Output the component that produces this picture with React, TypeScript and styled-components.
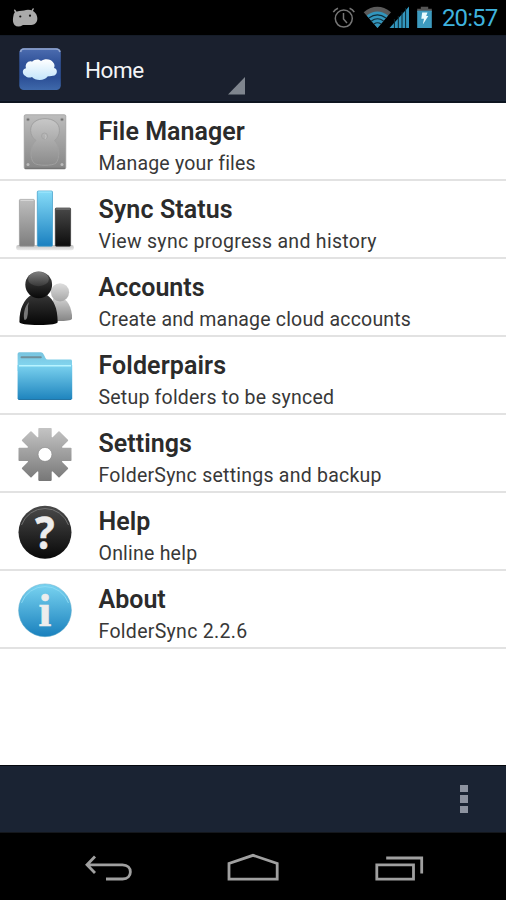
import React from "react";
import styled, { createGlobalStyle } from "styled-components";

const Global = createGlobalStyle`
  body { margin: 0; background: #000; }
  * { box-sizing: border-box; }
`;

const Screen = styled.div`
  width: 506px;
  height: 900px;
  display: flex;
  flex-direction: column;
  background: #fff;
  font-family: Roboto, "Noto Sans", sans-serif;
  overflow: hidden;
`;

const StatusBar = styled.header`
  flex: none;
  height: 35px;
  display: flex;
  align-items: center;
  justify-content: space-between;
  padding: 0 8px 0 0;
  background: #000;
`;

const StatusGroup = styled.div`
  display: flex;
  align-items: center;
  height: 35px;
`;

const Clock = styled.time`
  color: #3fb2dd;
  font-size: 24px;
  line-height: 35px;
  width: 56px;
  white-space: nowrap;
  letter-spacing: -0.9px;
  padding-top: 2px;
`;

const ActionBar = styled.div`
  flex: none;
  height: 68px;
  display: flex;
  align-items: center;
  background: #1a202e;
  border-top: 1px solid #151c28;
  border-bottom: 2px solid #0d1521;
  box-shadow: inset 0 -1px #1a2435;
`;

const Spinner = styled.div`
  display: flex;
  align-items: flex-end;
  width: 163px;
  height: 65px;
  margin-left: 4px;
`;

const PageTitle = styled.h1`
  flex: 1;
  margin: 0;
  padding-top: 3px;
  color: #f4f5f7;
  font-size: 22.5px;
  font-weight: 400;
  line-height: 62px;
  letter-spacing: -0.45px;
`;

const List = styled.ul`
  flex: 1;
  margin: 0;
  padding: 0;
  list-style: none;
  background: #fff;
`;

const Row = styled.li`
  height: 78px;
  display: flex;
  border-bottom: 2px solid #e2e2e2;
`;

const IconCell = styled.svg`
  flex: none;
  display: block;
  width: 90px;
  height: 76px;
`;

const Labels = styled.div`
  padding: 13px 0 0 8.5px;
  white-space: nowrap;
`;

const Title = styled.div<{ $spacing: number }>`
  color: #2b2b2b;
  font-size: 25px;
  font-weight: 600;
  line-height: 32px;
  letter-spacing: ${(p) => p.$spacing}px;
`;

const Subtitle = styled.div<{ $spacing: number }>`
  color: #383838;
  font-size: 19.5px;
  font-weight: 400;
  line-height: 31px;
  letter-spacing: ${(p) => p.$spacing}px;
`;

const BottomBar = styled.div`
  flex: none;
  height: 68px;
  display: flex;
  align-items: center;
  justify-content: flex-end;
  padding-right: 38px;
  background: #1a2333;
  border-top: 1px solid #05080e;
  border-bottom: 1px solid #14171c;
`;

const Overflow = styled.button`
  display: flex;
  flex-direction: column;
  gap: 3px;
  padding: 0;
  border: 0;
  background: none;
`;

const Dot = styled.span`
  width: 8px;
  height: 7.6px;
  background: #8d93a0;
`;

const NavBar = styled.nav`
  flex: none;
  height: 67px;
  display: flex;
  background: #000;
`;

const NavIcon = styled.svg`
  display: block;
  fill: none;
  stroke: #a0a0a0;
  stroke-width: 2.8;
`;

const Gradient = ({ id, from, to }: { id: string; from: string; to: string }) => (
  <linearGradient id={id} x1="0" y1="0" x2="0" y2="1">
    <stop offset="0" stopColor={from} />
    <stop offset="1" stopColor={to} />
  </linearGradient>
);

const DriveIcon = () => (
  <IconCell viewBox="0 0 90 76">
    <defs>
      <Gradient id="drive" from="#bdbdbd" to="#868686" />
      <Gradient id="plate" from="#c8c8c8" to="#8b8b8b" />
    </defs>
    <rect x="24.2" y="11.7" width="41.6" height="54.3" rx="1.5" fill="url(#drive)" stroke="#999" strokeWidth=".7" />
    <path d="M25 65.3H65" stroke="#707070" />
    <path d="M36 37.5C29 33 29 22 35 18.5C40 14.7 50 14.7 55 18.5C61 22 61 33 54.5 37.5C60 42 60 56 56 60C53 63 37 63 34 60C29.5 56 30 42 36 37.5Z" fill="url(#plate)" stroke="#a0a0a0" />
    <circle cx="44.5" cy="33" r="3" fill="none" stroke="#a5a5a5" />
    <path d="M45.5 31.8Q47 34 45 36" stroke="#c6c6c6" fill="none" />
    {[[28, 16.5], [62, 16.5]].map(([x, y]) => <circle key={x} cx={x} cy={y} r="1.5" fill="#707070" stroke="#aaa" strokeWidth=".6" />)}
    {[[28, 61.5], [62, 61.5]].map(([x, y]) => <circle key={x} cx={x} cy={y} r="1.5" fill="#bcbcbc" />)}
  </IconCell>
);

const BarsIcon = () => (
  <IconCell viewBox="0 0 90 76">
    <defs>
      <Gradient id="barGray" from="#bebebe" to="#7e7e7e" />
      <Gradient id="barBlue" from="#86dcf8" to="#1a80c0" />
      <Gradient id="barDark" from="#484848" to="#0c0c0c" />
      <Gradient id="base" from="#c0c0c0" to="#ededed" />
    </defs>
    <rect x="16.2" y="64" width="57.6" height="5.3" rx="2.2" fill="url(#base)" />
    <rect x="19.4" y="18.4" width="15" height="46.8" rx="1" fill="url(#barGray)" stroke="#999" strokeWidth=".7" />
    <rect x="37.3" y="10" width="15.2" height="55.2" rx="1" fill="url(#barBlue)" stroke="#3e9bc7" strokeWidth=".7" />
    <rect x="55.3" y="27" width="15.3" height="38.2" rx="1" fill="url(#barDark)" stroke="#333" strokeWidth=".7" />
    <path d="M20.5 19.3H33.5" stroke="#ddd" />
    <path d="M38.3 11H51.6" stroke="#a8ecff" />
    <path d="M56 28H70" stroke="#888" />
  </IconCell>
);

const AccountsIcon = () => (
  <IconCell viewBox="0 0 90 76">
    <defs>
      <Gradient id="backHead" from="#dedede" to="#a7a7a7" />
      <Gradient id="backBody" from="#d2d2d2" to="#858585" />
      <Gradient id="frontHead" from="#4c4c4c" to="#080808" />
      <Gradient id="frontBody" from="#353535" to="#050505" />
      <Gradient id="gloss" from="#a0a0a0" to="#454545" />
    </defs>
    <path d="M53 40C60 36 70 39 72 56V60Q70 62.5 53 62Z" fill="url(#backBody)" />
    <circle cx="60" cy="33.3" r="9.1" fill="url(#backHead)" />
    <path d="M31 36Q39 40 47 36C54 41 57.5 49 57.7 63Q57.5 65.8 39 66Q20 65.8 19.4 63C19.5 49 24 41 31 36Z" fill="url(#frontBody)" />
    <circle cx="38.7" cy="25.8" r="13.4" fill="url(#frontHead)" />
    <ellipse cx="38.5" cy="20" rx="10.5" ry="7.2" fill="url(#gloss)" opacity=".6" />
    <path d="M29 43C24 48 23 57 24.5 61Q28 61 28 51Q27.5 47 29 43Z" fill="#777" />
  </IconCell>
);

const FolderIcon = () => (
  <IconCell viewBox="0 0 90 76">
    <defs>
      <Gradient id="folder" from="#7bd2ef" to="#1d83bd" />
      <Gradient id="tab" from="#78c4df" to="#86dbf5" />
    </defs>
    <path d="M17.6 17Q17.6 15.3 19.3 15.3H41Q43 15.3 44 18L45.5 21Q46 22.6 48 22.6H70.5Q72 22.6 72 24V34H17.6Z" fill="url(#tab)" />
    <path d="M17.6 28H72.2V61.2Q72 63 70.4 63H19.5Q17.8 63 17.6 61.2Z" fill="url(#folder)" />
    <path d="M19 28.7H71" stroke="#b8f3ff" strokeWidth="1.5" />
    <path d="M21.5 20.3H40.8" stroke="#6f8f9a" strokeWidth="2" strokeLinecap="round" />
    <path d="M18.5 62.5H71" stroke="#2374a4" />
  </IconCell>
);

const GearIcon = () => (
  <IconCell viewBox="0 0 90 76">
    <defs>
      <linearGradient id="gear" gradientUnits="userSpaceOnUse" x1="0" y1="13" x2="0" y2="66">
        <stop offset="0" stopColor="#c4c4c4" />
        <stop offset="1" stopColor="#777" />
      </linearGradient>
      <mask id="teeth">
        <g fill="#fff">
          <circle cx="45" cy="39.4" r="18.5" />
          {[0, 45, 90, 135].map((a) => (
            <rect key={a} x="38.3" y="12.9" width="13.4" height="53" rx=".8" transform={`rotate(${a} 45 39.4)`} />
          ))}
        </g>
        <circle cx="45" cy="39.4" r="6.8" fill="#000" />
      </mask>
    </defs>
    <rect x="15" y="10" width="60" height="60" fill="url(#gear)" mask="url(#teeth)" />
    <circle cx="45" cy="39.4" r="7" fill="none" stroke="#8a8a8a" strokeWidth=".6" />
  </IconCell>
);

const Symbol = styled.text<{ $serif?: boolean }>`
  font-family: ${(p) => (p.$serif ? '"Liberation Serif", serif' : '"Open Sans", sans-serif')};
  font-size: ${(p) => (p.$serif ? 46 : 45)}px;
  font-weight: 700;
  text-anchor: middle;
  fill: #ededed;
  stroke: #ededed;
  stroke-width: 0.6px;
`;

const HelpIcon = () => (
  <IconCell viewBox="0 0 90 76">
    <defs><Gradient id="help" from="#4a4a4a" to="#080808" /></defs>
    <circle cx="45" cy="39.3" r="26.5" fill="url(#help)" />
    <path d="M21.5 32A25 25 0 0 1 68.5 32" stroke="#777" strokeWidth=".9" fill="none" />
    <Symbol x="50" y="55.7" transform="scale(.9 1)">?</Symbol>
  </IconCell>
);

const AboutIcon = () => (
  <IconCell viewBox="0 0 90 76">
    <defs><Gradient id="about" from="#7ad4f1" to="#1980bd" /></defs>
    <circle cx="45" cy="39.3" r="26.4" fill="url(#about)" stroke="#5aa9c9" strokeWidth=".5" />
    <path d="M21.5 32A25 25 0 0 1 68.5 32" stroke="#8edaf3" strokeWidth=".9" fill="none" />
    <Symbol $serif x="44.8" y="55.2">i</Symbol>
  </IconCell>
);

const AndroidHead = () => (
  <svg width="50" height="35" viewBox="0 0 50 35">
    <path d="M16 12.5L14.8 10.3M31.8 11.5L33.1 9" stroke="#aaa" strokeWidth="1.6" strokeLinecap="round" />
    <path d="M15 12Q19 10.5 24 10.4Q29 9 33 11C37 13 38.5 19 36.5 22Q34.5 25.5 30 25L23 25Q18 28 14.5 25Q12.4 22.5 13.1 17.5Q13.4 13.5 15 12Z" fill="#aaa" />
    <circle cx="20.3" cy="16.5" r="1.1" fill="#111" />
    <circle cx="30" cy="15.7" r="1.1" fill="#111" />
  </svg>
);

const StatusIcons = () => (
  <svg width="112" height="35" viewBox="330 0 112 35">
    <g fill="none" stroke="#767676" strokeWidth="1.5">
      <circle cx="343.8" cy="18.6" r="8.5" />
      <path d="M343.5 13V19L347 23M333.3 12.2Q334.8 9.5 338 8.2M349.6 8.2Q352.8 9.5 354.3 12.2" />
    </g>
    <path d="M377.5 28L363.7 12.2Q377.3 1.5 391 12.2Z" fill="#5b5b5b" />
    <path d="M377.5 28L366.7 15.6Q377.5 7.5 388 15.6Z" fill="#3296bd" />
    <g fill="none" stroke="#102c38" strokeWidth="1.1">
      <path d="M368.8 18Q377.5 11.7 386 18M371.3 21Q377.5 16.5 383.6 21M374 24Q377.5 21.5 381 24" />
    </g>
    <path d="M389.5 28L409 6.5V28Z" fill="#3296bd" />
    <path d="M394.4 19V28M398.3 16V28M402 12V28M405.6 8V28" stroke="#0b2630" strokeWidth="1" />
    <path d="M417.2 12V8.7H420.8V6.7H428.2V8.7H431.8V12Z" fill="#555" />
    <rect x="417.2" y="10.7" width="14.6" height="17.3" fill="#3d9bbf" />
    <path d="M422.2 12.5H427.5L426.2 16H428.3L422.8 24.6L424 18.7H421.3Z" fill="#eafcff" />
  </svg>
);

const CloudLogo = () => (
  <svg width="81" height="65" viewBox="0 36 81 65">
    <defs>
      <linearGradient id="logo" x1="0" y1="0" x2="0" y2="1">
        <stop offset="0" stopColor="#4d6db0" />
        <stop offset=".35" stopColor="#31539a" />
        <stop offset=".7" stopColor="#2c4f96" />
        <stop offset="1" stopColor="#3f69ab" />
      </linearGradient>
      <Gradient id="cloud" from="#fff" to="#c3e5fb" />
    </defs>
    <rect x="19.3" y="48.3" width="41.5" height="41.7" rx="4.5" fill="url(#logo)" />
    <path d="M20.5 52Q21 49 24 49H56Q59.5 49 60 52" stroke="#91a5cf" strokeWidth="1.6" fill="none" />
    <path d="M25.5 76C22 74.5 21.8 69 26 68.3C24.5 63.5 29 60 32 61.8C35 58.6 39.5 59 41 61C45 58.2 51 59 53 62.3C55 64.5 54.7 66.5 54 68C58.4 69 57.5 75.5 53 75.8C50.5 76.3 49 76.3 47.5 76.6C45 81 35 81 32 77C30 78 27 77.7 25.5 76Z" fill="url(#cloud)" />
  </svg>
);

const items = [
  { title: "File Manager", sub: "Manage your files", Icon: DriveIcon, ts: 0.05, ss: 0.18 },
  { title: "Sync Status", sub: "View sync progress and history", Icon: BarsIcon, ts: 0.1, ss: 0.3 },
  { title: "Accounts", sub: "Create and manage cloud accounts", Icon: AccountsIcon, ts: 0, ss: 0.18 },
  { title: "Folderpairs", sub: "Setup folders to be synced", Icon: FolderIcon, ts: 0.1, ss: 0.21 },
  { title: "Settings", sub: "FolderSync settings and backup", Icon: GearIcon, ts: 0.05, ss: 0.24 },
  { title: "Help", sub: "Online help", Icon: HelpIcon, ts: 0, ss: 0.22 },
  { title: "About", sub: "FolderSync 2.2.6", Icon: AboutIcon, ts: 0, ss: 0.3 },
];

export default function App() {
  return (
    <>
      <Global />
      <Screen>
        <StatusBar>
          <StatusGroup><AndroidHead /></StatusGroup>
          <StatusGroup>
            <StatusIcons />
            <Clock>20:57</Clock>
          </StatusGroup>
        </StatusBar>
        <ActionBar>
          <CloudLogo />
          <Spinner>
            <PageTitle>Home</PageTitle>
            <svg width="20" height="26" viewBox="0 0 20 26">
              <path d="M0 19.5L17 2V19.5Z" fill="#7f858e" />
            </svg>
          </Spinner>
        </ActionBar>
        <List>
          {items.map(({ title, sub, Icon, ts, ss }) => (
            <Row key={title}>
              <Icon />
              <Labels>
                <Title $spacing={ts}>{title}</Title>
                <Subtitle $spacing={ss}>{sub}</Subtitle>
              </Labels>
            </Row>
          ))}
        </List>
        <BottomBar>
          <Overflow aria-label="More options"><Dot /><Dot /><Dot /></Overflow>
        </BottomBar>
        <NavBar>
          <NavIcon width="506" height="67" viewBox="0 833 506 67">
            <path d="M95 856.5L87 864.8L95 873M87 864.8H122.5C133 865 133 878.8 122.5 879H106" />
            <path d="M229 879.2V863.4L253 855.3L277.2 863.4V879.2Z" />
            <path d="M376.8 864.8H413.5V879.2H376.8ZM386.2 858H421.7V873.5" />
          </NavIcon>
        </NavBar>
      </Screen>
    </>
  );
}
